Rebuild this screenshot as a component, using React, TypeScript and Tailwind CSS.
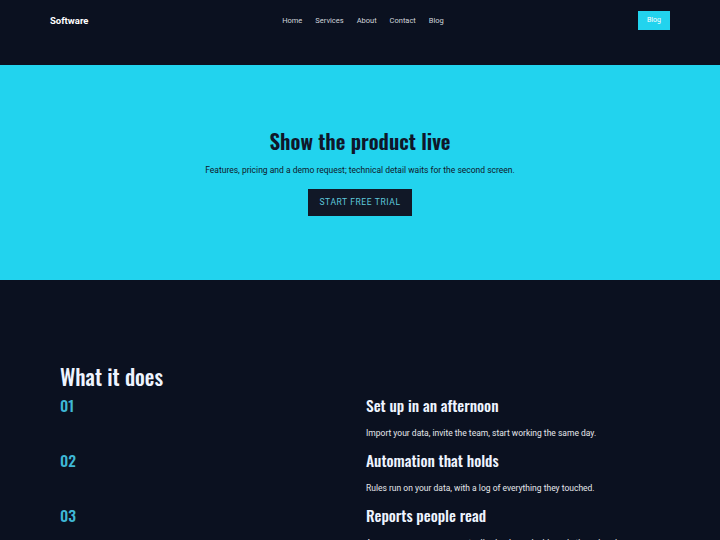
import React from "react";

const head = { fontFamily: "Oswald, 'DejaVu Sans Condensed', 'Liberation Sans Narrow', sans-serif" };

const items = [
  { n: "01", t: "Set up in an afternoon", d: "Import your data, invite the team, start working the same day." },
  { n: "02", t: "Automation that holds", d: "Rules run on your data, with a log of everything they touched." },
  { n: "03", t: "Reports people read", d: "Answers your managers actually check, on dashboards they already use." },
];

export default function App() {
  return (
    <div className="min-h-[540px] bg-[#0b1120] text-white" style={{ fontFamily: "Roboto, 'Liberation Sans', sans-serif" }}>
      <header className="h-[65px] flex items-start justify-between px-[50px] pt-[11px]">
        <div className="w-[140px] h-[20px] flex items-center text-[9.5px] font-bold text-white">Software</div>
        <nav className="flex gap-[13px] h-[19px] items-center pl-[6px] text-[7.5px] text-gray-300">
          <span>Home</span>
          <span>Services</span>
          <span>About</span>
          <span>Contact</span>
          <span>Blog</span>
        </nav>
        <div className="w-[140px] flex justify-end">
          <span className="h-[19px] w-[32px] flex items-center justify-center bg-[#22d3ee] text-[7px] text-white">Blog</span>
        </div>
      </header>
      <section className="h-[215px] bg-[#22d3ee] flex flex-col items-center pt-[62px]">
        <h1 className="text-[21px] leading-[28px] font-semibold text-[#0f172a]" style={head}>Show the product live</h1>
        <p className="mt-[9px] text-[8.5px] leading-[12px] text-[#0f172a]">Features, pricing and a demo request; technical detail waits for the second screen.</p>
        <button className="mt-[13px] h-[27px] w-[104px] bg-[#111827] text-[8.5px] tracking-[0.07em] text-[#5fc9dc]">START FREE TRIAL</button>
      </section>
      <section className="px-[60px] pt-[81px]">
        <h2 className="text-[21.5px] leading-[30px] font-medium text-[#eef4ff]" style={head}>What it does</h2>
        <div className="mt-[3px] flex flex-col gap-[9px]">
          {items.map((it) => (
            <div key={it.n} className="grid grid-cols-2 gap-3 h-[46px]">
              <div className="text-[15.5px] leading-[22px] font-medium text-[#3fb8d6]" style={head}>{it.n}</div>
              <div>
                <div className="text-[15.5px] leading-[22px] font-medium text-[#eef4ff]" style={head}>{it.t}</div>
                <div className="mt-[11px] text-[8.5px] leading-[12px] text-gray-200">{it.d}</div>
              </div>
            </div>
          ))}
        </div>
      </section>
    </div>
  );
}
